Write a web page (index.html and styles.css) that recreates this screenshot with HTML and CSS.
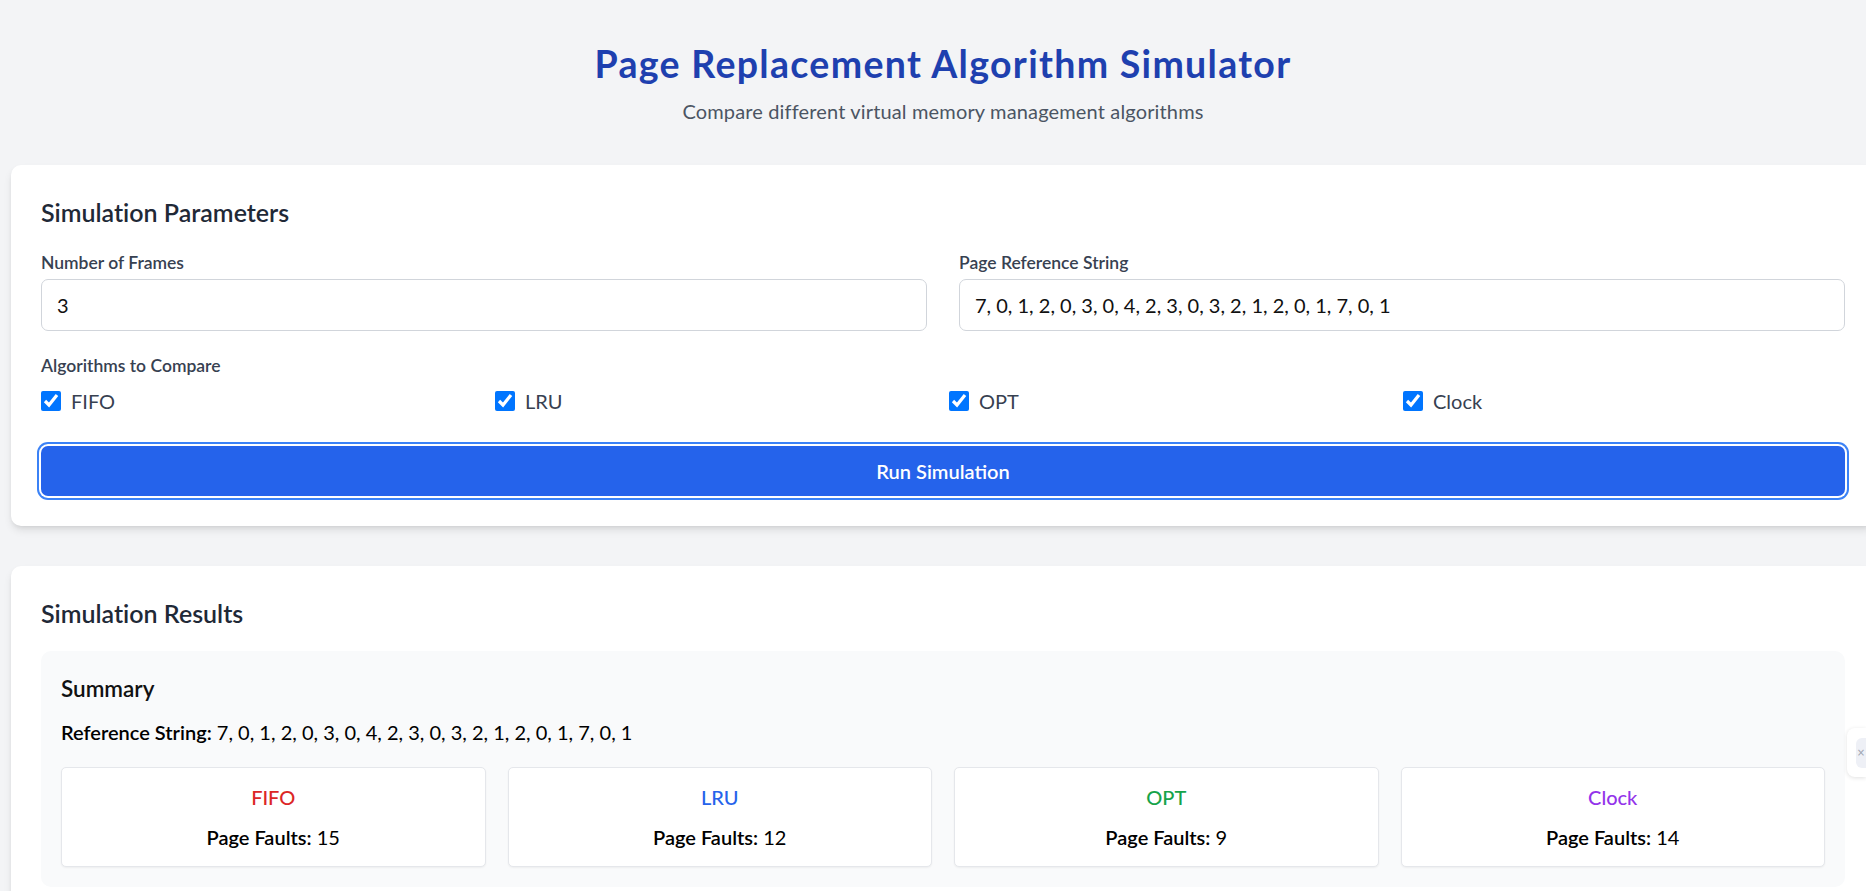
FILE: index.html
```html
<!DOCTYPE html>
<html lang="en">
<head>
<meta charset="utf-8">
<title>Page Replacement Algorithm Simulator</title>
<link rel="stylesheet" href="styles.css">
</head>
<body>
<div class="page">
  <header class="header">
    <h1 class="title">Page Replacement Algorithm Simulator</h1>
    <p class="subtitle">Compare different virtual memory management algorithms</p>
  </header>

  <section class="card">
    <h2 class="card-title">Simulation Parameters</h2>
    <div class="fields">
      <div class="field">
        <label class="label">Number of Frames</label>
        <input class="input" type="text" value="3">
      </div>
      <div class="field">
        <label class="label">Page Reference String</label>
        <input class="input" type="text" value="7, 0, 1, 2, 0, 3, 0, 4, 2, 3, 0, 3, 2, 1, 2, 0, 1, 7, 0, 1">
      </div>
    </div>
    <div class="algos">
      <div class="label">Algorithms to Compare</div>
      <div class="algo-grid">
        <label class="check"><input type="checkbox" checked><span>FIFO</span></label>
        <label class="check"><input type="checkbox" checked><span>LRU</span></label>
        <label class="check"><input type="checkbox" checked><span>OPT</span></label>
        <label class="check"><input type="checkbox" checked><span>Clock</span></label>
      </div>
    </div>
    <button class="run-btn" type="button">Run Simulation</button>
  </section>

  <section class="card results">
    <h2 class="card-title">Simulation Results</h2>
    <div class="summary">
      <h3 class="summary-title">Summary</h3>
      <p class="ref-line"><strong>Reference String:</strong> 7, 0, 1, 2, 0, 3, 0, 4, 2, 3, 0, 3, 2, 1, 2, 0, 1, 7, 0, 1</p>
      <div class="stats">
        <div class="stat">
          <div class="stat-name fifo">FIFO</div>
          <div class="stat-faults"><strong>Page Faults:</strong> 15</div>
        </div>
        <div class="stat">
          <div class="stat-name lru">LRU</div>
          <div class="stat-faults"><strong>Page Faults:</strong> 12</div>
        </div>
        <div class="stat">
          <div class="stat-name opt">OPT</div>
          <div class="stat-faults"><strong>Page Faults:</strong> 9</div>
        </div>
        <div class="stat">
          <div class="stat-name clock">Clock</div>
          <div class="stat-faults"><strong>Page Faults:</strong> 14</div>
        </div>
      </div>
    </div>
  </section>
</div>
<div class="side-tab"><span class="side-tab-inner">×</span></div>
</body>
</html>
```

FILE: styles.css
```css
html {
  overflow: hidden;
}

body {
  margin: 0;
  background: #f3f4f6;
  font-family: "Segoe UI", Lato, "Open Sans", sans-serif;
  font-variant-ligatures: none;
  font-feature-settings: "liga" 0;
  color: #000;
  overflow: hidden;
  height: 891px;
}

.page {
  width: 1864px;
  margin-left: 11px;
  padding-top: 41px;
}

.header {
  text-align: center;
  margin-bottom: 39px;
}

.title {
  margin: 0;
  font-size: 37.5px;
  line-height: 45px;
  font-weight: 700;
  letter-spacing: 1.3px;
  color: #1e40af;
}

.subtitle {
  margin: 10px 0 0;
  font-size: 20px;
  line-height: 30px;
  letter-spacing: 0.15px;
  color: #4b5563;
}

.card {
  background: #fff;
  border-radius: 10px;
  padding: 30px;
  box-shadow: 0 5px 8px -1px rgba(0, 0, 0, 0.1), 0 2px 5px -2px rgba(0, 0, 0, 0.1);
}

.results {
  margin-top: 40px;
}

.card-title {
  margin: 0 0 20px;
  font-size: 25px;
  line-height: 35px;
  font-weight: 600;
  color: #1f2937;
}

.fields {
  display: grid;
  grid-template-columns: 1fr 1fr;
  gap: 32px;
}

.field {
  display: flex;
  flex-direction: column;
}

.label {
  display: block;
  font-size: 17.5px;
  line-height: 25px;
  font-weight: 600;
  color: #374151;
  margin-bottom: 4px;
}

.input {
  box-sizing: border-box;
  height: 52px;
  width: 100%;
  border: 1px solid #d1d5db;
  border-radius: 7px;
  padding: 0 15px;
  font-family: inherit;
  font-size: 20px;
  color: #111;
  background: #fff;
  outline: none;
}

.algos {
  margin-top: 22px;
}

.algo-grid {
  display: grid;
  grid-template-columns: repeat(4, 1fr);
  gap: 12px;
  margin-top: 8px;
}

.check {
  display: flex;
  align-items: center;
  gap: 10px;
  font-size: 20px;
  line-height: 30px;
  color: #374151;
}

.check input {
  width: 20px;
  height: 20px;
  margin: 0;
  accent-color: #0075ff;
}

.run-btn {
  display: block;
  width: 100%;
  height: 50px;
  margin-top: 30px;
  border: none;
  border-radius: 7px;
  background: #2563eb;
  color: #fff;
  font-family: inherit;
  font-size: 20px;
  font-weight: 600;
  box-shadow: 0 0 0 2px #fff, 0 0 0 4px #3b82f6;
}

.summary {
  background: #f9fafb;
  border-radius: 10px;
  padding: 20px;
}

.summary-title {
  margin: 0;
  font-size: 22.5px;
  line-height: 35px;
  font-weight: 600;
  color: #111;
}

.ref-line {
  margin: 11px 0 0;
  font-size: 20px;
  line-height: 30px;
}

.ref-line strong,
.stat-faults strong {
  font-weight: 600;
}

.stats {
  display: grid;
  grid-template-columns: repeat(4, 1fr);
  gap: 22px;
  margin-top: 20px;
}

.stat {
  background: #fff;
  border: 1px solid #e5e7eb;
  border-radius: 5px;
  padding: 14px;
  text-align: center;
  box-shadow: 0 1px 2px rgba(0, 0, 0, 0.05);
}

.stat-name {
  font-size: 20px;
  line-height: 30px;
  font-weight: 500;
  margin-bottom: 10px;
}

.stat-faults {
  font-size: 20px;
  line-height: 30px;
}

.fifo { color: #dc2626; }
.lru { color: #2563eb; }
.opt { color: #16a34a; }
.clock { color: #9333ea; }

.side-tab {
  position: absolute;
  right: 0;
  top: 728px;
  width: 19px;
  height: 49px;
  background: #fff;
  border-radius: 8px 0 0 8px;
  box-shadow: 0 1px 4px rgba(0, 0, 0, 0.12);
}

.side-tab-inner {
  position: absolute;
  left: 9px;
  top: 10px;
  width: 10px;
  height: 30px;
  border-radius: 6px 0 0 6px;
  background: #eef0f6;
  color: #9ca3af;
  font-family: "DejaVu Sans", sans-serif;
  font-size: 10px;
  line-height: 30px;
  text-align: center;
}
```
